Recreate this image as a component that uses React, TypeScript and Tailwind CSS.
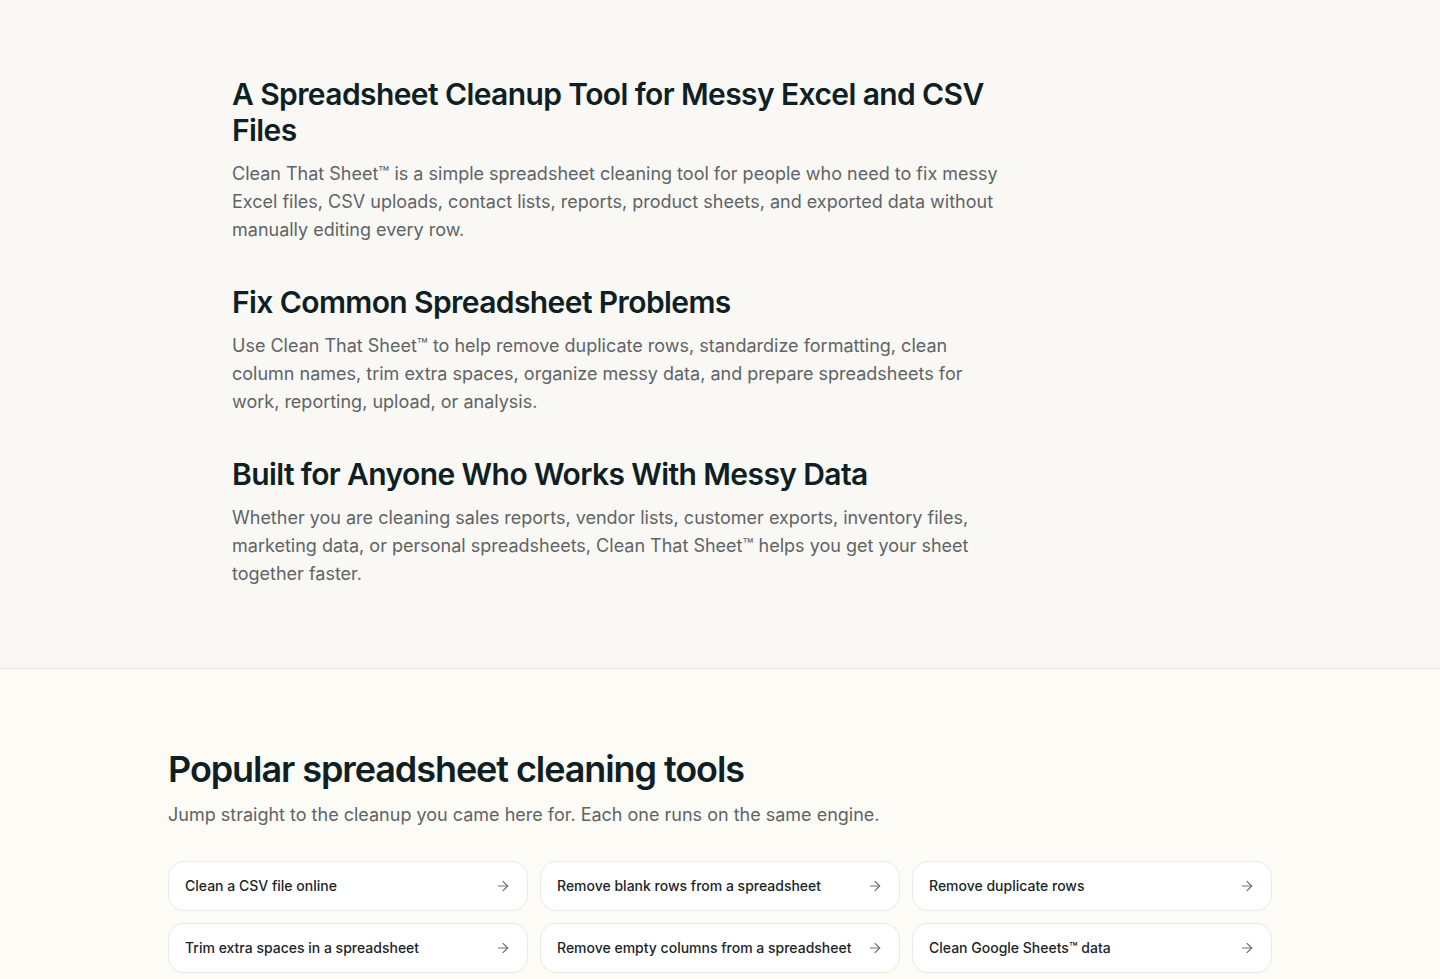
import { ArrowRight } from 'lucide-react';

const sections = [
  {
    title: 'A Spreadsheet Cleanup Tool for Messy Excel and CSV Files',
    body: 'Clean That Sheet™ is a simple spreadsheet cleaning tool for people who need to fix messy Excel files, CSV uploads, contact lists, reports, product sheets, and exported data without manually editing every row.',
  },
  {
    title: 'Fix Common Spreadsheet Problems',
    body: 'Use Clean That Sheet™ to help remove duplicate rows, standardize formatting, clean column names, trim extra spaces, organize messy data, and prepare spreadsheets for work, reporting, upload, or analysis.',
  },
  {
    title: 'Built for Anyone Who Works With Messy Data',
    body: 'Whether you are cleaning sales reports, vendor lists, customer exports, inventory files, marketing data, or personal spreadsheets, Clean That Sheet™ helps you get your sheet together faster.',
  },
];

const tools = [
  'Clean a CSV file online',
  'Remove blank rows from a spreadsheet',
  'Remove duplicate rows',
  'Trim extra spaces in a spreadsheet',
  'Remove empty columns from a spreadsheet',
  'Clean Google Sheets™ data',
];

export default function App() {
  return (
    <div className="min-h-screen bg-[#fcfbf6] font-['Inter',sans-serif]">
      <section className="bg-[#f9f8f4] border-b border-[#e6e4de]">
        <div className="max-w-5xl mx-auto px-6 pt-[76px] pb-20">
          <div className="max-w-3xl space-y-10">
            {sections.map((s) => (
              <div key={s.title}>
                <h2 className="text-3xl leading-9 font-semibold text-[#0f1f24] tracking-[-0.02em]">{s.title}</h2>
                <p className="mt-3 text-lg leading-7 text-[#5f6466]">{s.body}</p>
              </div>
            ))}
          </div>
        </div>
      </section>

      <section className="max-w-6xl mx-auto px-6 pt-20 pb-16">
        <h2 className="text-4xl leading-10 font-semibold text-[#0f1f24] tracking-[-0.03em]">
          Popular spreadsheet cleaning tools
        </h2>
        <p className="mt-3 text-lg leading-7 text-[#5f6466]">
          Jump straight to the cleanup you came here for. Each one runs on the same engine.
        </p>
        <div className="mt-8 grid grid-cols-3 gap-3">
          {tools.map((t) => (
            <a
              key={t}
              href="#"
              className="flex items-center justify-between rounded-2xl border border-[#ebe9e3] bg-white px-4 py-3.5 text-sm leading-5 font-medium text-[#1b2528]"
            >
              <span>{t}</span>
              <ArrowRight className="w-4 h-4 text-[#6b7072]" strokeWidth={1.75} />
            </a>
          ))}
        </div>
      </section>
    </div>
  );
}
